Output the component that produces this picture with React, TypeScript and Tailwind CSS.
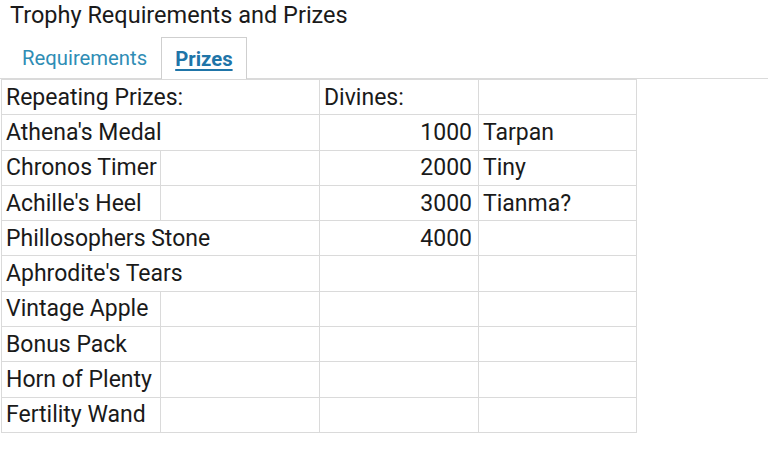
import React from "react";

const rows: { a: string; span?: boolean; b?: string; c?: string; d?: string }[] = [
  { a: "Repeating Prizes:", span: true, c: "Divines:", d: "" },
  { a: "Athena's Medal", span: true, c: "1000", d: "Tarpan" },
  { a: "Chronos Timer", b: "", c: "2000", d: "Tiny" },
  { a: "Achille's Heel", b: "", c: "3000", d: "Tianma?" },
  { a: "Phillosophers Stone", span: true, c: "4000", d: "" },
  { a: "Aphrodite's Tears", span: true, c: "", d: "" },
  { a: "Vintage Apple", b: "", c: "", d: "" },
  { a: "Bonus Pack", b: "", c: "", d: "" },
  { a: "Horn of Plenty", b: "", c: "", d: "" },
  { a: "Fertility Wand", b: "", c: "", d: "" },
];

export default function App() {
  const cell = "border border-[#dadada] pl-[4px] h-[35.3px] py-0 whitespace-nowrap overflow-visible text-[23px] leading-none align-middle";
  return (
    <div className="w-[768px] h-[475px] bg-white text-[#1a1a1a]" style={{ fontFamily: "Roboto, 'Liberation Sans', sans-serif" }}>
      <div className="pl-[10px] pt-[2px] text-[23.5px] leading-[27px] text-[#1a1a1a]">Trophy Requirements and Prizes</div>
      <div className="mt-[8px] flex border-b border-[#dadada] h-[42px] pl-[12px]">
        <div className="px-[10px] pt-[2px] flex items-center text-[20.3px] text-[#2f8db5]">Requirements</div>
        <div className="ml-[4px] px-[13px] pt-[2px] flex items-center text-[20.3px] font-bold text-[#1f75a8] underline underline-offset-[3px] border border-b-0 border-[#cfcfcf] bg-white -mb-px">Prizes</div>
      </div>
      <table className="ml-px border-collapse table-fixed w-[635px]">
        <colgroup>
          <col className="w-[159px]" />
          <col className="w-[159px]" />
          <col className="w-[159px]" />
          <col className="w-[158px]" />
        </colgroup>
        <tbody>
          {rows.map((r, i) => (
            <tr key={i}>
              {r.span ? (
                <td colSpan={2} className={cell + " pr-[2px]"}>{r.a}</td>
              ) : (
                <>
                  <td className={cell + " pr-[2px]"}>{r.a}</td>
                  <td className={cell + " pr-[2px]"}>{r.b}</td>
                </>
              )}
              <td className={cell + (i === 0 ? " text-left pr-[2px]" : " text-right pr-[6px]")}>{r.c}</td>
              <td className={cell + " pr-[2px]"}>{r.d}</td>
            </tr>
          ))}
        </tbody>
      </table>
    </div>
  );
}
